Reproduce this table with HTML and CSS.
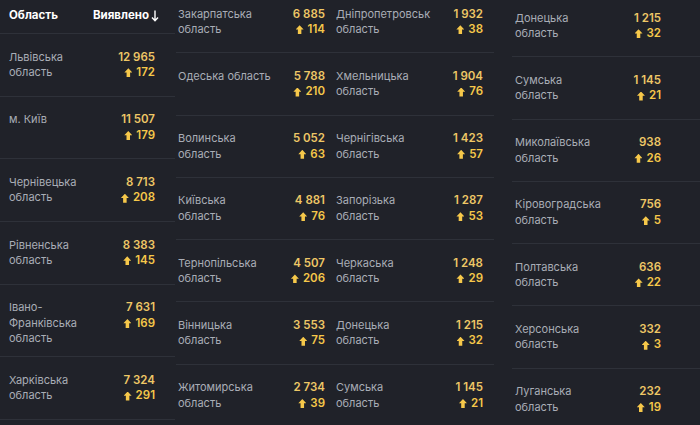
FILE: index.html
```html
<!DOCTYPE html>
<html lang="uk">
<head>
<meta charset="utf-8">
<link rel="stylesheet" href="styles.css">
</head>
<body>
<div class="board">
  <section class="panel p1">
    <div class="head">
      <span>Область</span>
      <span class="sort">Виявлено <svg class="sort-ico" viewBox="0 0 8 12" width="8" height="12"><path d="M4 0.5V10.5M1 7.5L4 10.8L7 7.5" fill="none" stroke="#fff" stroke-width="1.4"/></svg></span>
    </div>
    <div class="row"><div class="name">Львівська область</div><div class="nums"><div class="total">12 965</div><div class="inc"><i class="up"></i>172</div></div></div>
    <div class="row"><div class="name">м. Київ</div><div class="nums"><div class="total">11 507</div><div class="inc"><i class="up"></i>179</div></div></div>
    <div class="row"><div class="name">Чернівецька область</div><div class="nums"><div class="total">8 713</div><div class="inc"><i class="up"></i>208</div></div></div>
    <div class="row"><div class="name">Рівненська область</div><div class="nums"><div class="total">8 383</div><div class="inc"><i class="up"></i>145</div></div></div>
    <div class="row"><div class="name">Івано-Франківська область</div><div class="nums"><div class="total">7 631</div><div class="inc"><i class="up"></i>169</div></div></div>
    <div class="row"><div class="name">Харківська область</div><div class="nums"><div class="total">7 324</div><div class="inc"><i class="up"></i>291</div></div></div>
  </section>

  <section class="panel p2">
    <div class="row2">
      <div class="cell"><div class="name">Закарпатська область</div><div class="nums"><div class="total">6 885</div><div class="inc"><i class="up"></i>114</div></div></div>
      <div class="cell"><div class="name">Дніпропетровськ область</div><div class="nums"><div class="total">1 932</div><div class="inc"><i class="up"></i>38</div></div></div>
    </div>
    <div class="row2">
      <div class="cell"><div class="name single">Одеська область</div><div class="nums"><div class="total">5 788</div><div class="inc"><i class="up"></i>210</div></div></div>
      <div class="cell"><div class="name">Хмельницька область</div><div class="nums"><div class="total">1 904</div><div class="inc"><i class="up"></i>76</div></div></div>
    </div>
    <div class="row2">
      <div class="cell"><div class="name">Волинська область</div><div class="nums"><div class="total">5 052</div><div class="inc"><i class="up"></i>63</div></div></div>
      <div class="cell"><div class="name">Чернігівська область</div><div class="nums"><div class="total">1 423</div><div class="inc"><i class="up"></i>57</div></div></div>
    </div>
    <div class="row2">
      <div class="cell"><div class="name">Київська область</div><div class="nums"><div class="total">4 881</div><div class="inc"><i class="up"></i>76</div></div></div>
      <div class="cell"><div class="name">Запорізька область</div><div class="nums"><div class="total">1 287</div><div class="inc"><i class="up"></i>53</div></div></div>
    </div>
    <div class="row2">
      <div class="cell"><div class="name">Тернопільська область</div><div class="nums"><div class="total">4 507</div><div class="inc"><i class="up"></i>206</div></div></div>
      <div class="cell"><div class="name">Черкаська область</div><div class="nums"><div class="total">1 248</div><div class="inc"><i class="up"></i>29</div></div></div>
    </div>
    <div class="row2">
      <div class="cell"><div class="name">Вінницька область</div><div class="nums"><div class="total">3 553</div><div class="inc"><i class="up"></i>75</div></div></div>
      <div class="cell"><div class="name">Донецька область</div><div class="nums"><div class="total">1 215</div><div class="inc"><i class="up"></i>32</div></div></div>
    </div>
    <div class="row2">
      <div class="cell"><div class="name">Житомирська область</div><div class="nums"><div class="total">2 734</div><div class="inc"><i class="up"></i>39</div></div></div>
      <div class="cell"><div class="name">Сумська область</div><div class="nums"><div class="total">1 145</div><div class="inc"><i class="up"></i>21</div></div></div>
    </div>
  </section>

  <section class="panel p3">
    <div class="row"><div class="name">Донецька область</div><div class="nums"><div class="total">1 215</div><div class="inc"><i class="up"></i>32</div></div></div>
    <div class="row"><div class="name">Сумська область</div><div class="nums"><div class="total">1 145</div><div class="inc"><i class="up"></i>21</div></div></div>
    <div class="row"><div class="name">Миколаївська область</div><div class="nums"><div class="total">938</div><div class="inc"><i class="up"></i>26</div></div></div>
    <div class="row"><div class="name">Кіровоградська область</div><div class="nums"><div class="total">756</div><div class="inc"><i class="up"></i>5</div></div></div>
    <div class="row"><div class="name">Полтавська область</div><div class="nums"><div class="total">636</div><div class="inc"><i class="up"></i>22</div></div></div>
    <div class="row"><div class="name">Херсонська область</div><div class="nums"><div class="total">332</div><div class="inc"><i class="up"></i>3</div></div></div>
    <div class="row"><div class="name">Луганська область</div><div class="nums"><div class="total">232</div><div class="inc"><i class="up"></i>19</div></div></div>
  </section>
</div>
</body>
</html>
```

FILE: styles.css
```css
* { box-sizing: border-box; }
html, body {
  margin: 0;
  padding: 0;
  background: #202229;
  overflow: hidden;
}
body {
  width: 700px;
  height: 425px;
  font-family: Inter, "Noto Sans", sans-serif;
  font-size: 11px;
  line-height: 15.5px;
  color: #a9adb6;
}
.board {
  display: flex;
  align-items: flex-start;
  height: 425px;
  overflow: hidden;
}
.panel { flex: none; }
.p1 { width: 175px; }
.p2 { width: 332px; margin-top: -9px; padding-left: 1px; }
.p3 { width: 193px; margin-top: -5px; padding-left: 5px; }

.head {
  display: flex;
  justify-content: space-between;
  align-items: center;
  height: 34px;
  padding: 0 16px 2px 9px;
  border-bottom: 1px solid #2e3139;
  color: #ffffff;
  font-weight: 700;
  font-size: 11.5px;
}
.sort { display: flex; align-items: center; gap: 2px; }
.sort-ico { display: block; }

.row, .row2 {
  display: flex;
  min-height: 62.7px;
  border-bottom: 1px solid #2e3139;
}
.row2 { width: 318px; min-height: 62.3px; }
.p3 .row { min-height: 62.3px; }
.row { padding: 15.5px 20px 9.5px 9px; justify-content: space-between; }
.p3 .row { padding: 15.5px 39px 9.5px 3px; }
.cell {
  flex: 1;
  display: flex;
  justify-content: space-between;
  padding: 15.5px 10px 9.5px 2px;
}
.cell + .cell { padding-left: 1px; padding-right: 11px; }

.name { width: 92px; }
.name.single { white-space: nowrap; }
.nums {
  text-align: right;
  font-weight: 600;
  font-size: 11.5px;
}
.total { color: #eec766; }
.inc {
  color: #f6c84a;
  display: flex;
  justify-content: flex-end;
  align-items: center;
  gap: 4px;
}
.up {
  display: block;
  width: 8px;
  height: 9px;
  background: #f6c84a;
  clip-path: polygon(50% 0, 100% 48%, 72% 48%, 72% 100%, 28% 100%, 28% 48%, 0 48%);
}
```
